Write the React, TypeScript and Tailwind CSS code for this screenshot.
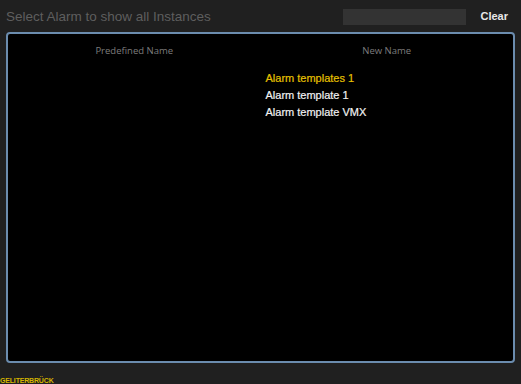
export default function App() {
    const items = [
        { name: "Alarm templates 1", active: true },
        { name: "Alarm template 1", active: false },
        { name: "Alarm template VMX", active: false },
    ]

    return (
        <div className="w-[521px] h-[384px] bg-[#202020] overflow-hidden flex flex-col font-['Liberation_Sans',Arial,sans-serif]">
            <div className="h-[32px] flex items-center pl-[6px] pr-[13px]">
                <span className="text-[13.5px] text-[#5e5e5e] leading-none pt-[1px]">Select Alarm to show all Instances</span>
                <div className="ml-auto w-[123px] h-[16px] bg-[#333333] mt-[2px]"></div>
                <button className="ml-[14px] text-[11px] font-bold text-[#e8e8e8] leading-none mt-[2px]">Clear</button>
            </div>
            <div className="ml-[6px] w-[509px] h-[333px] border-2 border-[#6b8cae] rounded-[4px] bg-black grid grid-cols-2 content-start">
                <div className="flex flex-col items-center">
                    <div className="h-[34px] flex items-center text-[9.5px] text-[#7c7c7c] font-['Open_Sans',sans-serif]">Predefined Name</div>
                </div>
                <div className="flex flex-col">
                    <div className="h-[34px] flex items-center justify-center text-[9.5px] text-[#7c7c7c] font-['Open_Sans',sans-serif]">New Name</div>
                    <ul className="pl-[5px] pt-[2px]">
                        {items.map((item) => (
                            <li key={item.name} className={`h-[17px] flex items-center text-[11px] [-webkit-text-stroke:0.2px] ${item.active ? "text-[#e6c000]" : "text-[#f2f2f2]"}`}>
                                {item.name}
                            </li>
                        ))}
                    </ul>
                </div>
            </div>
            <div className="mt-[14px] text-[7px] font-bold text-[#d4b400] leading-none uppercase tracking-tight">Geliterbrück</div>
        </div>
    )
}
